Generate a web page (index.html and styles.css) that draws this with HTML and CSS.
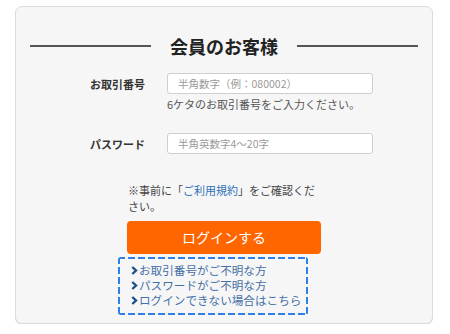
FILE: index.html
```html
<!DOCTYPE html>
<html lang="ja">
<head>
<meta charset="utf-8">
<link rel="stylesheet" href="styles.css">
</head>
<body>
<div class="card">
  <div class="title"><span class="line"></span><span class="title-text">会員のお客様</span><span class="line"></span></div>
  <div class="row row-first">
    <label class="label">お取引番号</label>
    <input class="input" type="text" placeholder="半角数字（例：080002）">
  </div>
  <p class="help">6ケタのお取引番号をご入力ください。</p>
  <div class="row row-second">
    <label class="label">パスワード</label>
    <input class="input" type="password" placeholder="半角英数字4～20字">
  </div>
  <p class="notice">※事前に「<a class="terms" href="#">ご利用規約</a>」をご確認ください。</p>
  <button class="btn" type="button">ログインする</button>
  <ul class="links">
    <li><svg class="chev" width="7" height="9" viewBox="0 0 7 9"><polyline points="1.3,1 5,4.5 1.3,8" fill="none" stroke="#1d4f8e" stroke-width="2.4"/></svg><a href="#">お取引番号がご不明な方</a></li>
    <li><svg class="chev" width="7" height="9" viewBox="0 0 7 9"><polyline points="1.3,1 5,4.5 1.3,8" fill="none" stroke="#1d4f8e" stroke-width="2.4"/></svg><a href="#">パスワードがご不明な方</a></li>
    <li><svg class="chev" width="7" height="9" viewBox="0 0 7 9"><polyline points="1.3,1 5,4.5 1.3,8" fill="none" stroke="#1d4f8e" stroke-width="2.4"/></svg><a href="#">ログインできない場合はこちら</a></li>
  </ul>
</div>
</body>
</html>
```

FILE: styles.css
```css
* { box-sizing: border-box; }
html, body { margin: 0; padding: 0; background: #fff; }
body {
  font-family: "Noto Sans CJK JP", "Noto Sans", sans-serif;
  color: #333;
}
.card {
  margin: 6px 0 0 15px;
  width: 418px;
  height: 318px;
  border: 1px solid #dcdcdc;
  border-radius: 7px;
  background: #f6f6f6;
  box-shadow: 0 1px 0 #e6e6e6;
  padding: 27px 14px 0;
}
.title {
  display: flex;
  align-items: center;
  gap: 19px;
  height: 24px;
}
.title-text {
  font-size: 18px;
  line-height: 24px;
  font-weight: 700;
  color: #222;
}
.line {
  flex: 1;
  height: 1.5px;
  background: #555;
}
.row {
  display: flex;
  align-items: center;
  padding-left: 60px;
}
.row-first { margin-top: 15px; }
.row-second { margin-top: 21px; }
.label {
  width: 77px;
  font-size: 11px;
  line-height: 16px;
  font-weight: 700;
  color: #333;
}
.input {
  width: 206px;
  height: 21px;
  border: 1px solid #cfcfcf;
  border-radius: 3px;
  background: #fff;
  padding: 0 10px;
  font-family: inherit;
  font-size: 10.5px;
  outline: none;
}
.input::placeholder { color: #9a9a9a; }
.help {
  margin: 2px 0 0 137px;
  font-size: 11px;
  line-height: 16px;
  color: #555;
}
.notice {
  margin: 28px 0 0 98px;
  width: 193px;
  font-size: 11px;
  line-height: 16px;
  color: #444;
}
.terms { color: #2d6fb7; text-decoration: none; }
.btn {
  display: block;
  margin: 7px 0 0 97px;
  width: 194px;
  height: 33px;
  border: none;
  border-radius: 4px;
  background: #ff6600;
  color: #fff;
  font-family: inherit;
  font-size: 14px;
  line-height: 33px;
  padding: 0;
}
.links {
  list-style: none;
  margin: 3px 0 0 88px;
  padding: 6px 0 0 13px;
  width: 190px;
  height: 58px;
  border-radius: 3px;
  background:
    repeating-linear-gradient(90deg, #2f7fe8 0 7px, transparent 7px 10px) left top / 100% 2px no-repeat,
    repeating-linear-gradient(90deg, #2f7fe8 0 7px, transparent 7px 10px) left bottom / 100% 2px no-repeat,
    repeating-linear-gradient(180deg, #2f7fe8 0 7px, transparent 7px 10px) left top / 2px 100% no-repeat,
    repeating-linear-gradient(180deg, #2f7fe8 0 7px, transparent 7px 10px) right top / 2px 100% no-repeat;
}
.links li {
  display: flex;
  align-items: center;
  height: 15px;
  font-size: 11.6px;
  line-height: 15px;
}
.chev { margin-right: 1px; flex: none; }
.links a { color: #4470a6; text-decoration: none; }
```
